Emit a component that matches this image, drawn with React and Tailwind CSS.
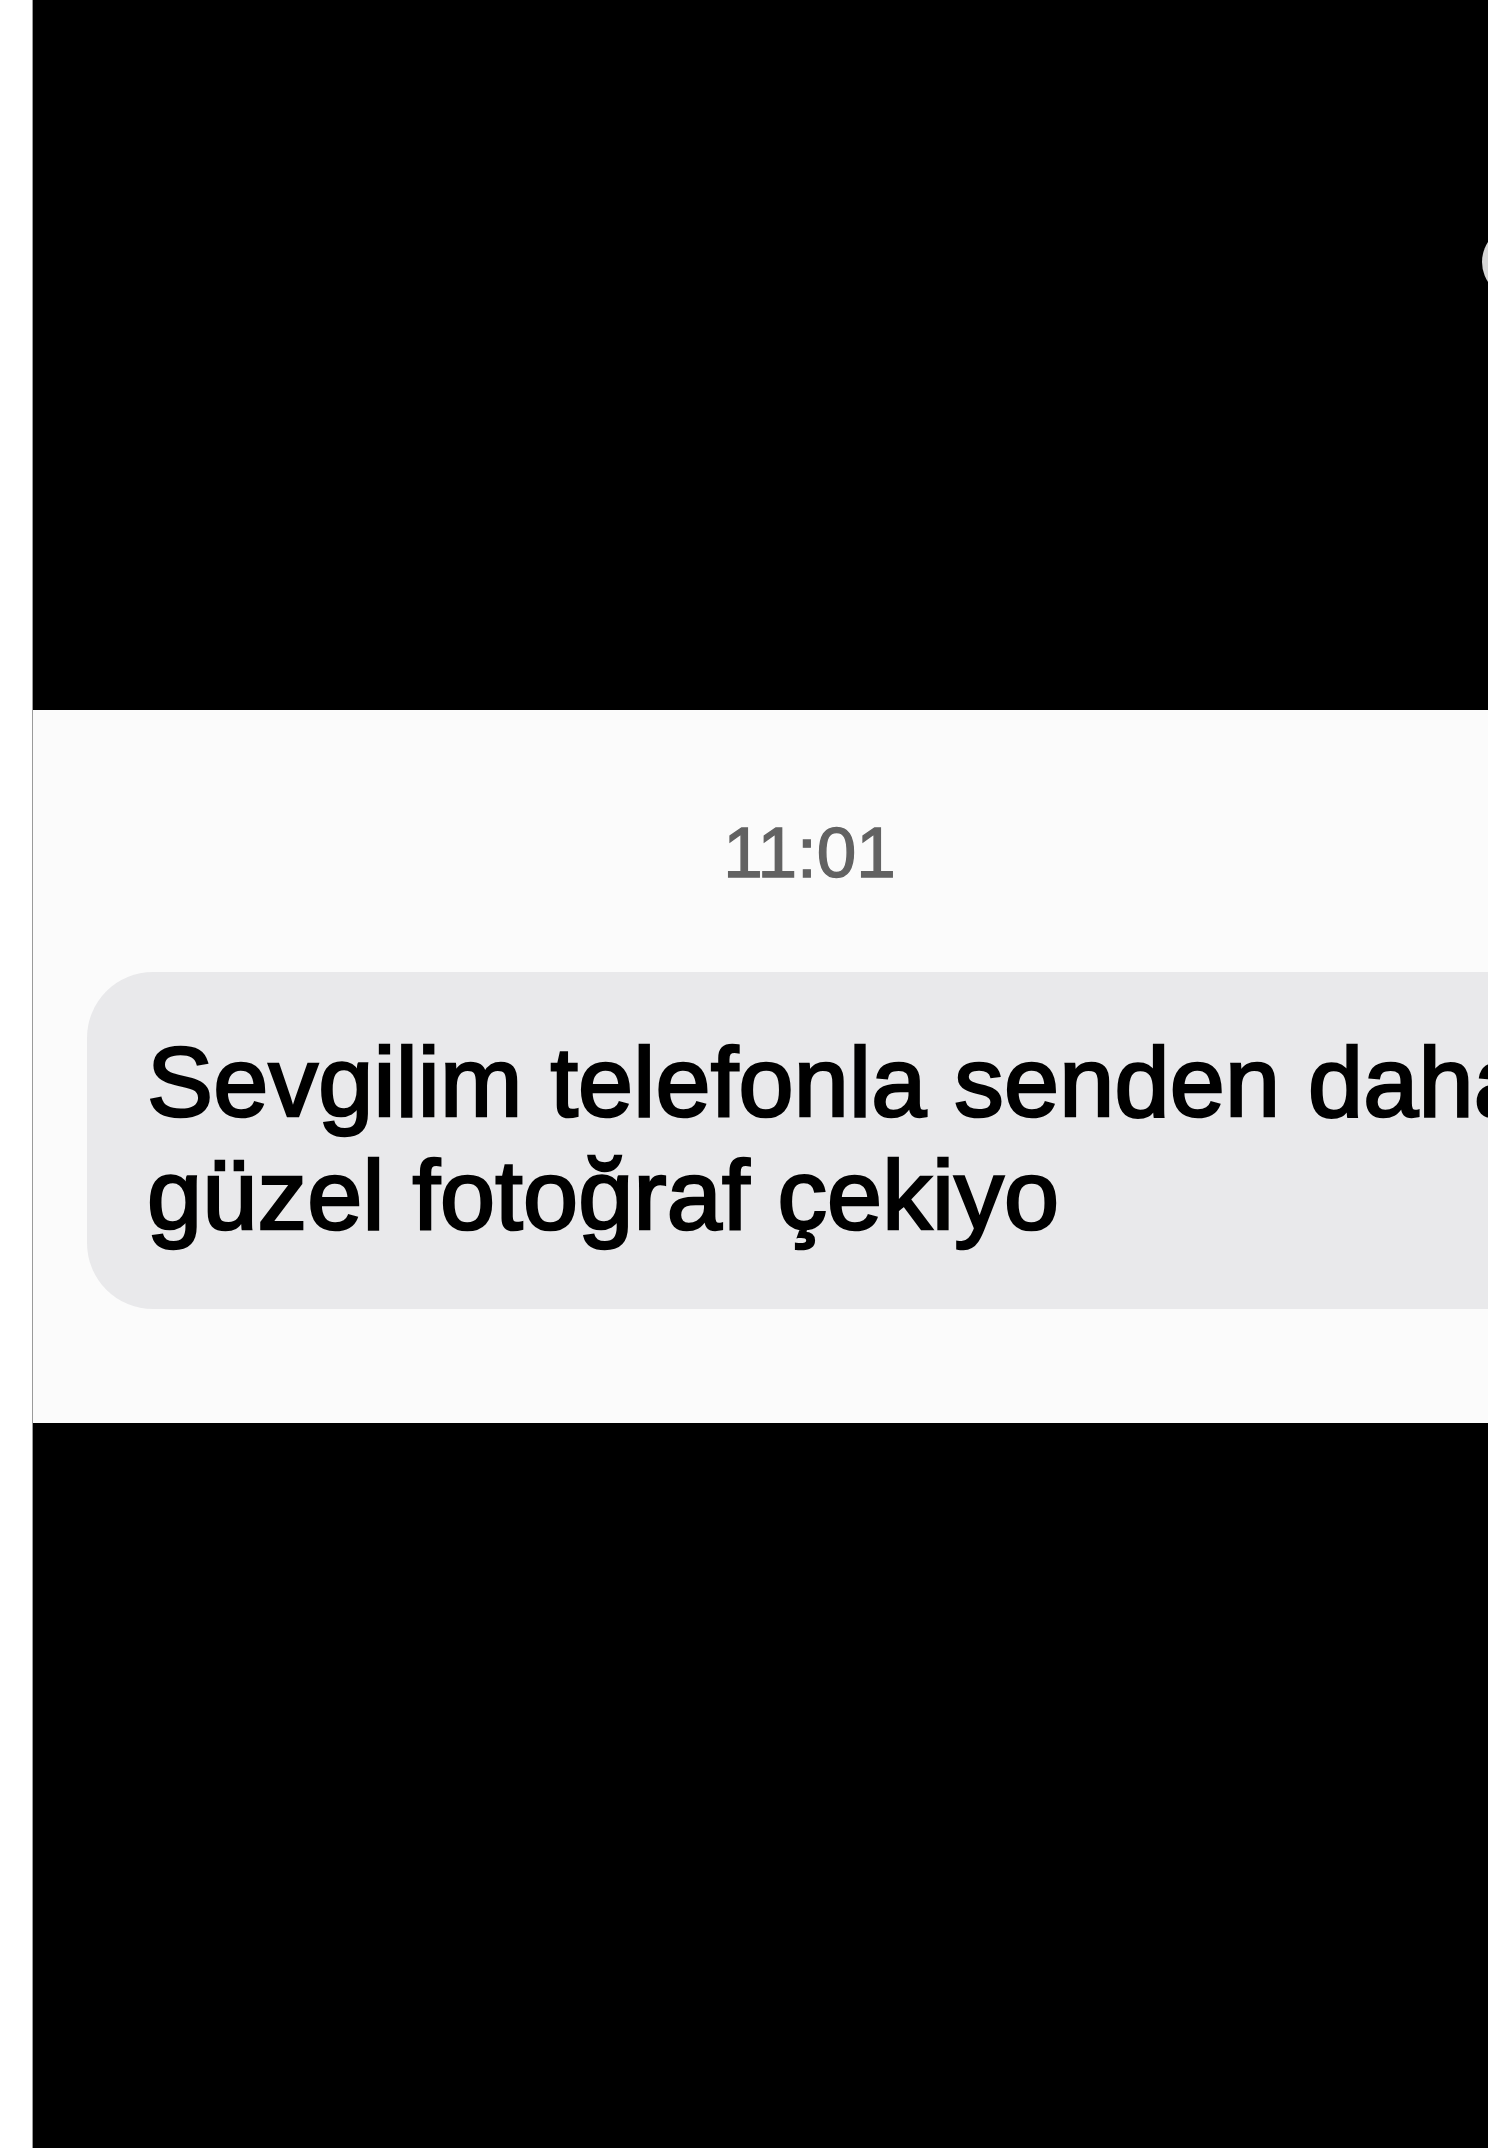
import React from 'react';

const App = () => {
  return (
    <div className="w-[1488px] h-[2148px] bg-white flex overflow-hidden">
      {/* left white margin */}
      <div className="w-[32px] shrink-0 bg-white" />

      <div className="flex-1 min-w-0 overflow-hidden flex flex-col border-l border-[#9a9a9a]">
        {/* top black area with partial circle on the right */}
        <div className="relative h-[710px] shrink-0 bg-black overflow-hidden">
          <div className="absolute left-[1449px] top-[226px] w-[72px] h-[72px] rounded-full bg-[#d6d6d6]" />
        </div>

        {/* message panel */}
        <div className="h-[713px] shrink-0 bg-[#fbfbfb] overflow-hidden flex flex-col">
          <div className="pt-[107px] pl-[98px] flex justify-center">
            <span className="text-[71px] leading-none text-[#626262] font-['Liberation_Sans',Arial,sans-serif] [-webkit-text-stroke:1.4px_#626262]">
              11:01
            </span>
          </div>

          <div className="mt-[84px] ml-[54px] w-[1520px] shrink-0 rounded-[66px] bg-[#e9e9eb] pl-[60px] pt-[53px] pb-[58px]">
            <p className="whitespace-nowrap text-[99px] leading-[113px] tracking-[0.2px] text-black font-['Liberation_Sans',Arial,sans-serif] [-webkit-text-stroke:2.6px_#000]">
              Sevgilim telefonla senden daha
              <br />
              güzel fotoğraf çekiyo
            </p>
          </div>
        </div>

        {/* bottom black area */}
        <div className="flex-1 bg-black" />
      </div>
    </div>
  );
};

export default App;
